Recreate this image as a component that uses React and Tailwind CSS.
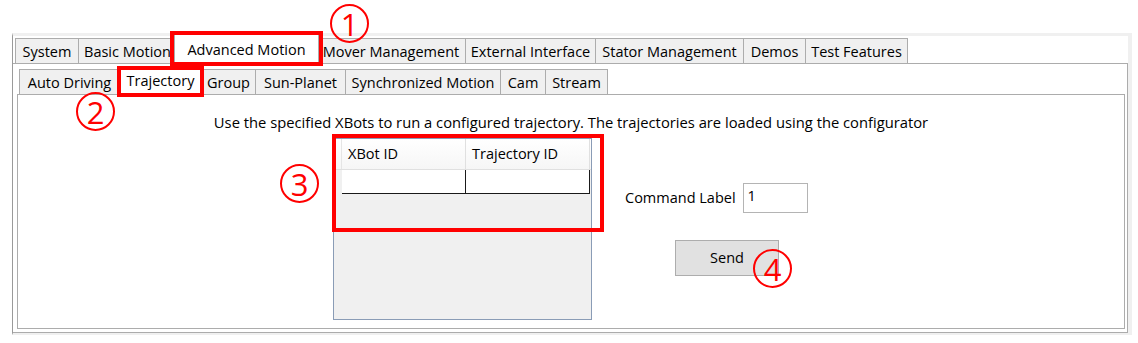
import React from 'react';

const mainTabs = [
  { label: 'System', w: 'w-[64px]' },
  { label: 'Basic Motion', w: 'w-[99px]' },
  { label: 'Advanced Motion', w: 'w-[145px]', active: true },
  { label: 'Mover Management', w: 'w-[150px]' },
  { label: 'External Interface', w: 'w-[131px]' },
  { label: 'Stator Management', w: 'w-[149px]' },
  { label: 'Demos', w: 'w-[63px]' },
  { label: 'Test Features', w: 'w-[103px]' },
];

const subTabs = [
  { label: 'Auto Driving', w: 'w-[101px]' },
  { label: 'Trajectory', w: 'w-[87px]', active: true },
  { label: 'Group', w: 'w-[55px]' },
  { label: 'Sun-Planet', w: 'w-[91px]' },
  { label: 'Synchronized Motion', w: 'w-[156px]' },
  { label: 'Cam', w: 'w-[46px]' },
  { label: 'Stream', w: 'w-[63px]' },
];

function TabStrip({ tabs, activeHeight }) {
  return (
    <div className="flex items-end h-full">
      {tabs.map((t, i) => {
        const prevActive = i > 0 && tabs[i - 1].active;
        if (t.active) {
          return (
            <div
              key={t.label}
              className={`${t.w} ${activeHeight} -ml-[3px] -mb-px relative z-10 bg-white border-t border-l border-r border-[#acacac] flex items-center justify-center whitespace-nowrap`}
            >
              {t.label}
            </div>
          );
        }
        return (
          <div
            key={t.label}
            className={`${t.w} h-[25px] pt-px ${i === 0 ? '' : prevActive ? '-ml-[3px]' : '-ml-px'} bg-[#f0f0f0] border-t border-l border-r border-[#acacac] flex items-center justify-center whitespace-nowrap overflow-hidden`}
          >
            {t.label}
          </div>
        );
      })}
    </div>
  );
}

function Circled({ n, className }) {
  return (
    <div className={`absolute ${className} rounded-full border-2 border-[#ff0000] flex items-center justify-center text-[#ff0000] text-[31px] leading-none`}>
      <span className="translate-y-[1px]">{n}</span>
    </div>
  );
}

export default function App() {
  return (
    <div className="relative w-[1138px] h-[343px] bg-white overflow-hidden text-black text-[14.5px] font-['Open_Sans','Noto_Sans',sans-serif]">
      <div className="ml-[12px] pt-[33px]">
        <div className="w-[1120px] h-[302px] flex flex-col border-t-[3px] border-r-[4px] border-b-[2px] border-[#f0f0f0] border-l border-l-[#9a9a9a]">
          {/* top level tabs */}
          <div className="h-[27px] pl-[2px]">
            <TabStrip tabs={mainTabs} activeHeight="h-[30px]" />
          </div>

          {/* page */}
          <div className="flex-1 border-t border-r border-b border-[#acacac] bg-white flex flex-col pl-[4px] pr-[2px] pb-[3px]">
            <div className="h-[30px] pl-[2px]">
              <TabStrip tabs={subTabs} activeHeight="h-[29px]" />
            </div>

            <div className="flex-1 border border-[#acacac] bg-white">
              <p className="pt-[17px] leading-[20px] text-center text-[14.75px]">
                Use the specified XBots to run a configured trajectory. The trajectories are loaded using the configurator
              </p>

              <div className="flex mt-[6px] ml-[315px]">
                {/* data grid */}
                <div className="w-[259px] h-[182px] border border-[#8a9cb6] bg-[#f0f0f0]">
                  <div className="flex h-[31px] bg-linear-to-b from-white to-[#f6f6f6] border-b border-[#e0e0e0]">
                    <div className="w-[8px] border-r border-[#e5e5e5]" />
                    <div className="w-[124px] border-r border-[#e0e0e0] pl-[6px] flex items-center">XBot ID</div>
                    <div className="w-[124px] border-r border-[#e0e0e0] pl-[6px] flex items-center">Trajectory ID</div>
                  </div>
                  <div className="flex h-[24px]">
                    <div className="w-[8px]" />
                    <div className="w-[124px] bg-white border-r border-b border-[#1a1a1a]" />
                    <div className="w-[124px] bg-white border-r border-b border-[#1a1a1a]" />
                  </div>
                </div>

                {/* command */}
                <div className="ml-[33px] mt-[45px] flex flex-col">
                  <div className="flex items-center gap-[7px] h-[30px]">
                    <span className="whitespace-nowrap">Command Label</span>
                    <div className="w-[65px] h-[30px] border border-[#b4b4b4] bg-white pl-[4px] pt-[2px] leading-[20px]">1</div>
                  </div>
                  <button className="mt-[27px] ml-[50px] w-[104px] h-[36px] bg-[#e1e1e1] border border-[#adadad] flex items-center justify-center">
                    Send
                  </button>
                </div>
              </div>
            </div>
          </div>
        </div>
      </div>

      {/* annotations */}
      <div className="absolute left-[170px] top-[31px] w-[153px] h-[35px] border-4 border-[#ff0000] z-20" />
      <div className="absolute left-[117px] top-[66px] w-[87px] h-[31px] border-4 border-[#ff0000] z-20" />
      <div className="absolute left-[332px] top-[134px] w-[272px] h-[98px] border-4 border-[#ff0000] z-20" />
      <Circled n="1" className="left-[330px] top-[4px] w-[39px] h-[39px] z-20" />
      <Circled n="2" className="left-[76px] top-[92px] w-[39px] h-[39px] z-20" />
      <Circled n="3" className="left-[280px] top-[164px] w-[39px] h-[39px] z-20" />
      <Circled n="4" className="left-[753px] top-[249px] w-[39px] h-[39px] z-20" />
    </div>
  );
}
